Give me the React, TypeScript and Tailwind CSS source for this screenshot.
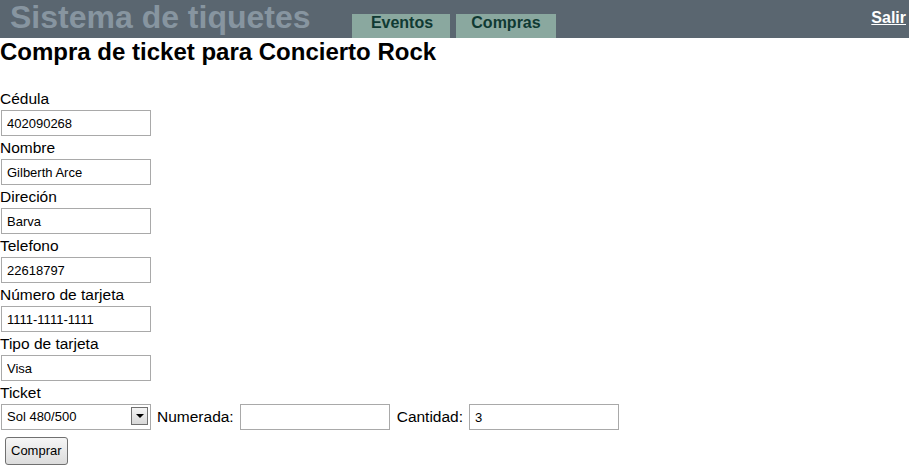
import React from 'react';

const fields = [
  { label: 'Cédula', value: '402090268' },
  { label: 'Nombre', value: 'Gilberth Arce' },
  { label: 'Direción', value: 'Barva' },
  { label: 'Telefono', value: '22618797' },
  { label: 'Número de tarjeta', value: '1111-1111-1111' },
  { label: 'Tipo de tarjeta', value: 'Visa' },
];

const inputCls =
  'h-[26px] w-[150px] border border-[#a9a9a9] bg-white px-[5px] text-[13px] text-black outline-none';

export default function App() {
  return (
    <div className="min-h-screen bg-white font-['Liberation_Sans',Arial,sans-serif] text-black">
      <header className="flex h-[38px] items-start bg-[#5a6670]">
        <div className="w-[352px] pl-[10px] text-[32px] font-bold leading-[34px] text-[#8795a0]">
          Sistema de tiquetes
        </div>
        <nav className="mt-[14px] flex gap-[6px]">
          <a href="#" className="h-[24px] w-[98px] bg-[#8aa89f] pl-[2px] text-center text-[16px] font-bold leading-[18px] text-[#103a33]">
            Eventos
          </a>
          <a href="#" className="h-[24px] w-[100px] bg-[#8aa89f] text-center text-[16px] font-bold leading-[18px] text-[#103a33]">
            Compras
          </a>
        </nav>
        <a href="#" className="ml-auto mr-[3px] mt-[9px] text-[16px] font-bold leading-[18px] text-white underline">
          Salir
        </a>
      </header>

      <main>
        <h1 className="mb-[21px] text-[24px] font-bold leading-[28px]">
          Compra de ticket para Concierto Rock
        </h1>

        <form className="flex flex-col" onSubmit={(e) => e.preventDefault()}>
          {fields.map((f) => (
            <div key={f.label} className="flex flex-col">
              <label className="pb-[2px] pt-[3px] text-[15.5px] leading-[18px]">{f.label}</label>
              <input className={`${inputCls} ml-[1px]`} defaultValue={f.value} />
            </div>
          ))}

          <label className="pb-[2px] pt-[3px] text-[15.5px] leading-[18px]">Ticket</label>
          <div className="flex items-center text-[15.5px]">
            <div className="relative ml-[1px] h-[26px] w-[150px]">
              <select className="h-full w-full appearance-none border border-[#a9a9a9] bg-white px-[5px] text-[13px] outline-none">
                <option>Sol 480/500</option>
                <option>Sombra 120/200</option>
              </select>
              <div className="pointer-events-none absolute right-[3px] top-[3px] flex h-[18px] w-[17px] items-center justify-center border border-[#707070] bg-gradient-to-b from-[#f4f4f4] to-[#d8d8d8]">
                <span className="block h-0 w-0 border-l-[4px] border-r-[4px] border-t-[4px] border-l-transparent border-r-transparent border-t-black" />
              </div>
            </div>
            <span className="ml-[6px]">Numerada:</span>
            <input className={`${inputCls} ml-[6px]`} />
            <span className="ml-[7px]">Cantidad:</span>
            <input className={`${inputCls} ml-[6px]`} defaultValue="3" />
          </div>

          <div className="mt-[7px]">
            <button
              type="submit"
              className="ml-[5px] h-[28px] rounded-[3px] border border-[#707070] bg-gradient-to-b from-[#f6f6f6] to-[#dcdcdc] px-[5px] text-[13px]"
            >
              Comprar
            </button>
          </div>
        </form>
      </main>
    </div>
  );
}
